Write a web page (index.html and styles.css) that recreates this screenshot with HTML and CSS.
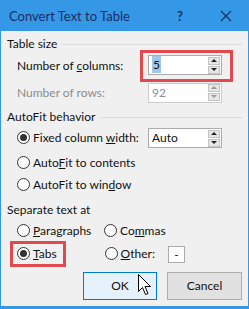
FILE: index.html
```html
<!DOCTYPE html>
<html lang="en">
  <head>
    <meta charset="utf-8">
    <title>Convert Text to Table</title>
    <link rel="stylesheet" href="styles.css">
  </head>
  <body>
  <div class="window">
    <div class="titlebar">
      <span class="title">Convert Text to Table</span>
      <span class="help">?</span>
      <svg class="close" width="12" height="12" viewBox="0 0 12 12"><path d="M1 1L11 11M11 1L1 11" stroke="#1b2c66" stroke-width="1.2"/></svg>
    </div>

    <div class="content">
      <div class="group-head"><span>Table size</span><i></i></div>

      <div class="row row-cols">
        <span class="label">Number of <u>c</u>olumns:</span>
        <div class="mark mark-spin">
          <div class="spin"><span class="val"><em>5</em></span><span class="arrows"><b class="up"></b><b class="down"></b></span></div>
        </div>
      </div>

      <div class="row row-rows disabled">
        <span class="label">Number of rows:</span>
        <div class="spin"><span class="val">92</span><span class="arrows"><b class="up"></b><b class="down"></b></span></div>
      </div>

      <div class="group-head gh-auto"><span>AutoFit behavior</span><i></i></div>

      <div class="row row-fixed">
        <span class="label radio checked">Fixed column <u>w</u>idth:</span>
        <div class="spin"><span class="val">Auto</span><span class="arrows"><b class="up"></b><b class="down"></b></span></div>
      </div>
      <div class="row row-opt row-contents"><span class="label radio">Auto<u>F</u>it to contents</span></div>
      <div class="row row-opt"><span class="label radio">AutoFit to win<u>d</u>ow</span></div>

      <div class="group-head gh-sep"><span>Separate text at</span></div>

      <div class="row row-opt">
        <span class="label radio col1"><u>P</u>aragraphs</span>
        <span class="label radio">Co<u>m</u>mas</span>
      </div>
      <div class="row row-tabs">
        <div class="mark mark-tabs"><span class="label radio checked"><u>T</u>abs</span></div>
        <span class="label radio other"><u>O</u>ther:</span>
        <span class="char">-</span>
      </div>

      <div class="buttons">
        <button class="btn btn-ok">OK</button>
        <button class="btn">Cancel</button>
      </div>
    </div>

    <svg class="cursor" width="13" height="22" viewBox="0 0 13 22">
      <path d="M0.5 0.5V17.5L4.5 13.5L7.5 20.5L10 19.5L7 12.5H12.5Z" fill="#fff" stroke="#000" stroke-width="1" stroke-linejoin="round"/>
    </svg>
  </div>
  </body>
</html>
```

FILE: styles.css
```css
html, body {
  margin: 0;
  padding: 0;
}
body {
  font-family: Lato, "Noto Sans", sans-serif;
  font-size: 12px;
  line-height: 16px;
  color: #111;
  background: #f0f0f0;
}

.window {
  position: relative;
  width: 249px;
  height: 309px;
  box-sizing: border-box;
  background: #f0f0f0;
  border: 1px solid #3598e6;
  border-top: 0;
  border-bottom-width: 3px;
  display: flex;
  flex-direction: column;
}

.titlebar {
  height: 31px;
  flex: none;
  background: #3598e6;
  display: flex;
  align-items: center;
  margin: 0 -1px;
  color: #1b2c66;
}
.title {
  font-size: 13px;
  padding-left: 9px;
  flex: 1;
}
.help {
  font-size: 13px;
  font-weight: bold;
  margin-right: 37px;
}
.close {
  margin-right: 17px;
}

.content {
  padding: 6px 6px 0 6px;
  flex: 1;
  display: flex;
  flex-direction: column;
}

.group-head {
  display: flex;
  align-items: center;
  height: 14px;
  flex: none;
  margin-bottom: -1px;
}
.group-head i {
  flex: 1;
  height: 1px;
  background: #dcdcdc;
  margin-left: 5px;
}
.gh-auto {
  margin-top: 7px;
  margin-bottom: 0;
}
.gh-sep {
  margin-top: 10px;
  margin-bottom: 0;
}

.row {
  display: flex;
  align-items: center;
  flex: none;
}
.label {
  padding-left: 10px;
  width: 133px;
  box-sizing: border-box;
  white-space: nowrap;
}
.row-rows {
  height: 21px;
}
.row-rows .spin,
.row-fixed .spin {
  margin-left: 8px;
}
.row-fixed {
  height: 20px;
  margin-top: 4px;
}
.row-opt {
  height: 16px;
  margin-top: 6px;
}
.row-contents {
  margin-top: 7px;
}
.row-opt .label {
  width: auto;
}
.row-opt .col1 {
  width: 87px;
}

.disabled {
  color: #8d8d8d;
}

.mark {
  border: 3px solid #e04a4f;
}
.mark-spin {
  padding: 2px 8px 4px 5px;
}

.spin {
  width: 74px;
  height: 20px;
  box-sizing: border-box;
  border: 1px solid #ababab;
  background: #fff;
  display: flex;
  align-items: center;
}
.disabled .spin {
  border-color: #cccccc;
}
.val {
  flex: 1;
  padding-left: 3px;
}
.val em {
  font-style: normal;
  background: #9fc7ec;
  padding: 1px 1px;
}
.arrows {
  width: 12px;
  height: 18px;
  display: flex;
  flex-direction: column;
  justify-content: center;
  gap: 1px;
  margin-right: 1px;
}
.arrows b {
  background: #e6e6e6;
  border: 1px solid #c4c4c4;
  position: relative;
  box-sizing: border-box;
  height: 8px;
}
.arrows b::after {
  content: "";
  position: absolute;
  left: 2px;
  top: 1px;
  border-left: 3px solid transparent;
  border-right: 3px solid transparent;
}
.arrows .up::after {
  border-bottom: 3px solid #222;
}
.arrows .down::after {
  border-top: 3px solid #222;
}
.disabled .arrows .up::after {
  border-bottom-color: #999;
}
.disabled .arrows .down::after {
  border-top-color: #999;
}

.radio {
  position: relative;
  padding-left: 26px;
}
.radio::before {
  content: "";
  position: absolute;
  left: 10px;
  top: 50%;
  width: 13px;
  height: 13px;
  margin-top: -7px;
  box-sizing: border-box;
  border: 1px solid #333;
  border-radius: 50%;
  background: #fff;
}
.radio.checked::after {
  content: "";
  position: absolute;
  left: 13px;
  top: 50%;
  width: 7px;
  height: 7px;
  margin-top: -4px;
  border-radius: 50%;
  background: #333;
}

.row-tabs {
  margin-top: 2px;
}
.mark-tabs {
  margin-left: 3px;
  padding: 2px 6px 2px 0;
}
.mark-tabs .radio {
  padding-left: 20px;
  width: auto;
}
.mark-tabs .radio::before {
  left: 4px;
}
.mark-tabs .radio.checked::after {
  left: 7px;
}
.other {
  width: auto;
  margin-left: 29px;
}
.char {
  width: 17px;
  height: 17px;
  box-sizing: border-box;
  border: 1px solid #ababab;
  background: #fff;
  margin-left: 13px;
  text-align: center;
  line-height: 15px;
}

.buttons {
  display: flex;
  justify-content: flex-end;
  gap: 10px;
  margin-top: 5px;
}
.btn {
  font: inherit;
  color: #111;
  height: 28px;
  width: 75px;
  background: #e1e1e1;
  border: 1px solid #adadad;
  padding: 0;
}
.btn-ok {
  width: 74px;
  background: #e5f1fb;
  border-color: #0078d7;
}

.cursor {
  position: absolute;
  left: 137px;
  top: 274px;
}
```
